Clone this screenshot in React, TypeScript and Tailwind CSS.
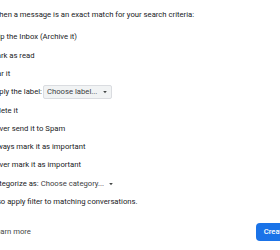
interface FilterOption {
  label: string;
  select?: 'box' | 'plain';
  placeholder?: string;
}

const options: FilterOption[] = [
  { label: 'Skip the Inbox (Archive it)' },
  { label: 'Mark as read' },
  { label: 'Star it' },
  { label: 'Apply the label:', select: 'box', placeholder: 'Choose label...' },
  { label: 'Delete it' },
  { label: 'Never send it to Spam' },
  { label: 'Always mark it as important' },
  { label: 'Never mark it as important' },
  { label: 'Categorize as:', select: 'plain', placeholder: 'Choose category...' },
  { label: 'Also apply filter to matching conversations.' },
];

function Caret() {
  return (
    <svg viewBox="0 0 10 10" className="w-[6px] h-[6px] text-[#444746]">
      <path d="M2 3.5h6L5 7z" fill="currentColor" />
    </svg>
  );
}

export default function App() {
  return (
    <div
      className="w-[280px] h-[250px] overflow-hidden bg-white text-[#202124] text-[7.7px]"
      style={{ fontFamily: 'Roboto, Arial, sans-serif' }}
    >
      <div className="ml-[-30px] w-[342px]">
        {/* Header */}
        <div className="h-[28px] pt-[10px] pl-[22.5px] leading-[10px]">
          When a message is an exact match for your search criteria:
        </div>

        {/* Options */}
        <div>
          {options.map((opt) => (
            <label
              key={opt.label}
              className="h-[18.3px] flex items-center gap-[8px]"
            >
              <span className="w-[12px] h-[12px] border border-[#5f6368] rounded-[2px]" />
              <span className="whitespace-nowrap">{opt.label}</span>
              {opt.select === 'box' && (
                <span className="ml-[-7px] h-[14px] w-[69px] flex items-center justify-between px-[3px] bg-[#f1f3f4] border border-[#dadce0] rounded-[2px] text-[#3c4043]">
                  <span className="whitespace-nowrap">{opt.placeholder}</span>
                  <Caret />
                </span>
              )}
              {opt.select === 'plain' && (
                <span className="ml-[-6px] flex items-center gap-[4px] text-[#3c4043]">
                  <span className="whitespace-nowrap">{opt.placeholder}</span>
                  <Caret />
                </span>
              )}
            </label>
          ))}
        </div>

        {/* Footer */}
        <div className="mt-[12px] h-[18px] flex items-center justify-between">
          <a className="pl-[22px] text-[#444746]">Learn more</a>
          <button className="h-[18px] px-[8px] rounded-[4px] bg-[#1a73e8] text-white font-medium whitespace-nowrap">
            Create filter
          </button>
        </div>
      </div>
    </div>
  );
}
